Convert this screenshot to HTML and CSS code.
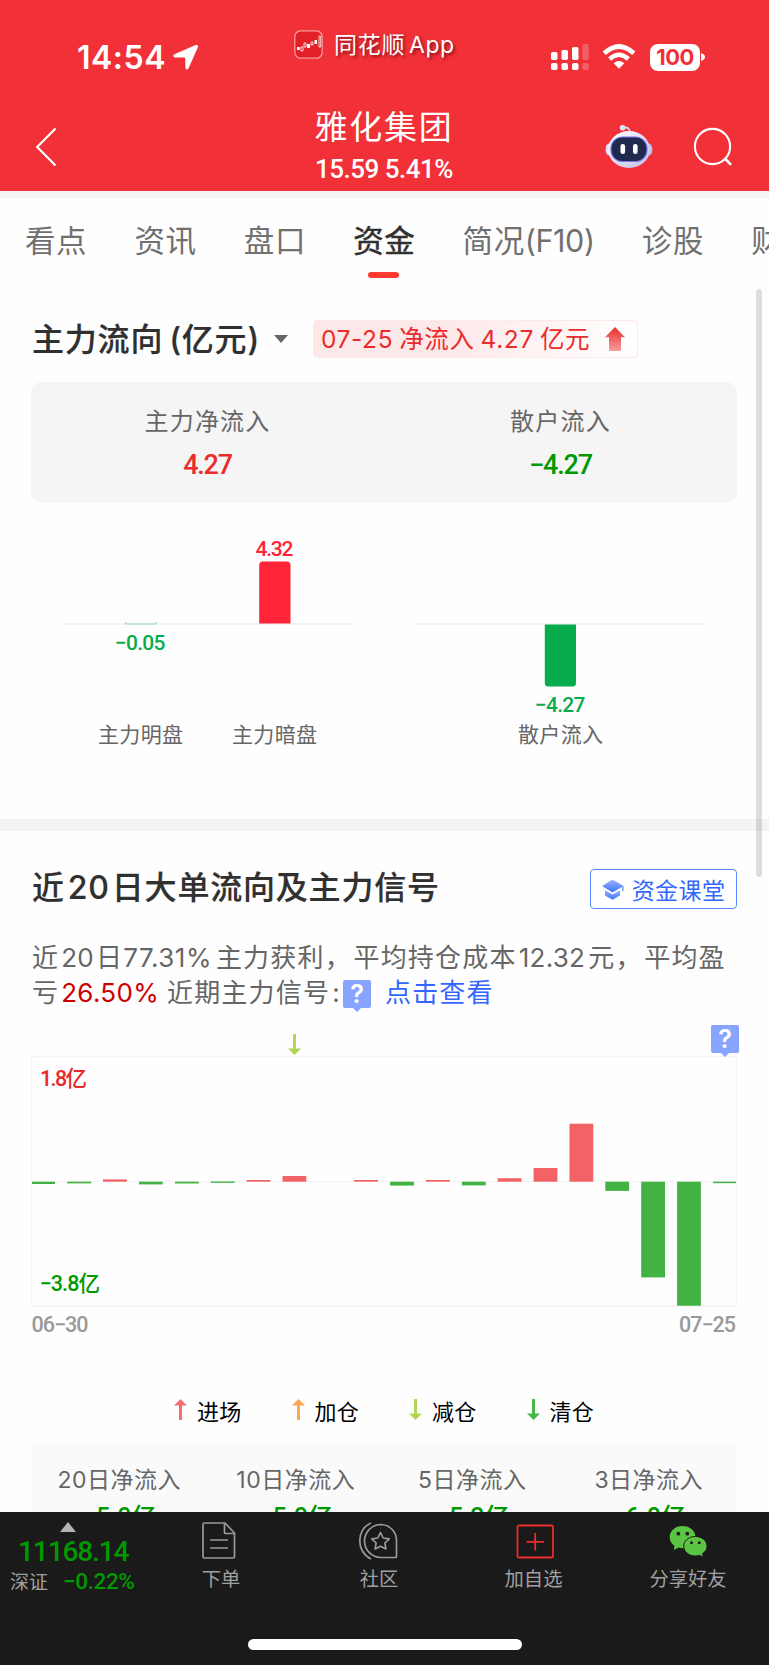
FILE: index.html
```html
<!DOCTYPE html>
<html lang="zh-CN">

<head>
    <meta charset="UTF-8" />
    <meta name="viewport" content="width=device-width, initial-scale=1.0" />
    <title>雅化集团 - 资金</title>
    <link rel="stylesheet" href="styles.css">
</head>

<body>

    <header>
        <div class="status">
            <div class="clock">
                <span class="time">14:54</span>
                <svg width="27" height="27" viewBox="0 0 27 27">
                    <path d="M25.6 1.2Q26.4 2 25.9 3.2L16.6 24.3Q15.9 25.8 14.6 25.6Q13.4 25.3 13.4 23.8L13.2 14.5Q13.2 13.6 12.3 13.6L3 13.4Q1.4 13.3 1.2 12.2Q1 11 2.4 10.3L23.6 1Q24.9 .5 25.6 1.2Z" fill="#fff" />
                </svg>
            </div>
            <div class="app-name">
                <svg width="29" height="29" viewBox="0 0 29 29">
                    <rect x=".8" y=".8" width="27.4" height="27.4" rx="6" fill="#e32027" stroke="#f99b9d" stroke-width="1.3" />
                    <path d="M3 17h2.800v3H3zM13 14h3v4h-3zM20.5 10h2.5v4h-2.5z" fill="#fff" />
                    <path d="M7 17h2v4H7zM10 13h2v4h-2zM17 12h2v3h-2zM25 6h1.7v11H25z" fill="none" stroke="#fff" stroke-width=".8" />
                </svg>
                <span>同花顺<i>App</i></span>
            </div>
            <div class="signals">
                <svg width="39" height="28" viewBox="0 0 39 28" fill="#fff">
                    <rect x="1" y="9" width="6.5" height="8" rx="1.8" />
                    <rect x="11.5" y="7" width="6.5" height="10" rx="1.8" />
                    <rect x="22" y="4" width="6.5" height="13" rx="1.8" />
                    <rect x="32.3" y="1" width="6.5" height="16" rx="1.8" opacity=".22" />
                    <rect x="1" y="20" width="6.5" height="7" rx="1.8" />
                    <rect x="11.5" y="20" width="6.5" height="7" rx="1.8" />
                    <rect x="22" y="20" width="6.5" height="7" rx="1.8" />
                    <rect x="32.3" y="20" width="6.5" height="7" rx="1.8" opacity=".22" />
                </svg>
                <svg class="wifi" width="34" height="26" viewBox="0 0 34 26">
                    <path d="M2.2 9.3Q17-4.3 31.8 9.3" fill="none" stroke="#fff" stroke-width="4.6" />
                    <path d="M7.6 15Q17 6.6 26.4 15" fill="none" stroke="#fff" stroke-width="4.4" />
                    <path d="M11.7 19.3Q17 14.8 22.3 19.3L17 24.7Z" fill="#fff" />
                </svg>
                <div class="battery">100</div>
                <svg width="4" height="8" viewBox="0 0 4 8">
                    <path d="M0 0Q4 1.3 4 4T0 8Z" fill="#fff" />
                </svg>
            </div>
        </div>
        <div class="topbar">
            <svg class="back" width="24" height="42" viewBox="0 0 24 42">
                <path d="M20.5 2.5L2.2 21L20.5 39.5" fill="none" stroke="#fff" stroke-width="2.2" />
            </svg>
            <div class="stock">
                <h1>雅化集团</h1>
                <p>15.59 5.41%</p>
            </div>
            <div class="tools">
                <svg width="48" height="45" viewBox="0 0 48 45">
                    <path d="M18 4Q24 2 25 8" fill="none" stroke="#d8dcf2" stroke-width="1.8" />
                    <circle cx="17.5" cy="3.8" r="2.8" fill="#dfe3f5" />
                    <ellipse cx="3.8" cy="25.5" rx="3.2" ry="6" fill="#d9dcf5" />
                    <ellipse cx="44.2" cy="25.5" rx="3.2" ry="6" fill="#b9bbe8" />
                    <ellipse cx="24" cy="25.5" rx="21" ry="18.5" fill="url(#shell)" />
                    <rect x="6" y="13" width="36" height="24.5" rx="11.5" fill="#202a4e" stroke="#7c73e8" stroke-width="1.2" />
                    <rect x="15.5" y="20" width="4.6" height="10" rx="2.2" fill="#fff" />
                    <rect x="28" y="20" width="4.6" height="10" rx="2.2" fill="#fff" />
                    <defs>
                        <linearGradient id="shell" x1="0" y1="0" x2="1" y2="1">
                            <stop offset="0" stop-color="#fff" />
                            <stop offset="1" stop-color="#bfbfe8" />
                        </linearGradient>
                    </defs>
                </svg>
                <svg class="search" width="42" height="42" viewBox="0 0 42 42">
                    <circle cx="20.5" cy="20.5" r="17.6" fill="none" stroke="#fff" stroke-width="2.1" />
                    <path d="M32.5 32L39 38.8" stroke="#fff" stroke-width="2.6" />
                </svg>
            </div>
        </div>
    </header>

    <nav>
        <a>看点</a>
        <a>资讯</a>
        <a>盘口</a>
        <a class="active">资金</a>
        <a>简况<i>(F10)</i></a>
        <a>诊股</a>
        <a>财务</a>
    </nav>

    <main>
        <section class="flow">
            <div class="flow-head">
                <h2>主力流向<i>(</i>亿元<i>)</i></h2>
                <span class="caret"></span>
                <div class="tag">
                    <span><i>07-25</i> 净流入 <i>4.27</i> 亿元</span>
                    <svg width="20" height="24" viewBox="0 0 20 24">
                        <defs>
                            <linearGradient id="up" x1="0" y1="0" x2="0" y2="1">
                                <stop offset="0" stop-color="#ea2c2c" />
                                <stop offset="1" stop-color="#f79c9e" />
                            </linearGradient>
                        </defs>
                        <path d="M10 0L20 10.3H16V22.5Q16 24 14.5 24H5.5Q4 24 4 22.5V10.3H0Z" fill="url(#up)" />
                    </svg>
                </div>
            </div>

            <div class="summary">
                <div>
                    <p>主力净流入</p>
                    <strong class="red">4.27</strong>
                </div>
                <div>
                    <p>散户流入</p>
                    <strong class="green">−4.27</strong>
                </div>
            </div>

            <svg class="chart" width="706" height="316" viewBox="31 503 706 316">
                <path d="M62.5 624H353M415.5 624H705.5" stroke="#f3f3f3" stroke-width="2" />
                <path d="M125.5 622V623Q125.5 624 128 624H154Q156.5 624 156.5 623V622" fill="none" stroke="#8fd6ae" stroke-width="1" />
                <path d="M259.2 623.6V565Q259.2 561.5 262.7 561.5H287Q290.5 561.5 290.5 565V623.6Z" fill="#ff2437" />
                <path d="M544.8 624.4V683Q544.8 686.6 548.3 686.6H572.5Q576 686.6 576 683V624.4Z" fill="#09ac4c" />
                <g class="num" font-size="21">
                    <text x="255.5" y="555.5" textLength="38" fill="#ff2437">4.32</text>
                    <text x="115" y="650" textLength="50.5" fill="#09ac4c">−0.05</text>
                    <text x="535" y="711.7" textLength="50.5" fill="#09ac4c">−4.27</text>
                </g>
                <g class="axis-name" font-size="21" fill="#666">
                    <text x="98" y="742" textLength="85">主力明盘</text>
                    <text x="232" y="742" textLength="85">主力暗盘</text>
                    <text x="518" y="742" textLength="85">散户流入</text>
                </g>
            </svg>
        </section>

        <section class="signal">
            <div class="signal-head">
                <h2>近<i class="n">20</i>日大单流向及主力信号</h2>
                <button>
                    <svg width="22" height="21" viewBox="0 0 22 21">
                        <defs>
                            <linearGradient id="cap" x1="0" y1="0" x2="0" y2="1">
                                <stop offset="0" stop-color="#9ab4ff" />
                                <stop offset="1" stop-color="#3f73fb" />
                            </linearGradient>
                        </defs>
                        <path d="M10.5 .5L21.5 7V12H20.3V7.7L10.5 13.5L0 7Z" fill="url(#cap)" />
                        <path d="M3 11.2L10.5 15.5L18 11.2V16.5L10.5 20.7L3 16.5Z" fill="url(#cap)" />
                    </svg>
                    资金课堂
                </button>
            </div>

            <p class="desc">近<i class="n">20</i>日<i class="pct">77.31%</i>主力获利<span class="comma">，</span>平均持仓成本<i class="n cost">12.32</i>元<span class="comma">，</span>平均盈<br>亏<i class="n loss">26.50%</i><span class="recent">近期主力信号<i class="colon">:</i></span><span class="help">?</span><a>点击查看</a></p>

            <div class="arrow-row">
                <svg width="13" height="21" viewBox="0 0 13 21">
                    <path d="M5 0h3v14.5h5L6.5 21L0 14.5h5z" fill="#b2d556" />
                </svg>
                <span class="help">?</span>
            </div>

            <svg class="chart" width="706" height="282" viewBox="31 1056 706 282">
                <rect x="31.5" y="1056.5" width="705" height="249.5" fill="none" stroke="#f3f3f3" stroke-width="1.4" />
                <path d="M32 1181.5H736" stroke="#f1f1f1" stroke-width="1" />
                <g fill="#f16365">
                    <rect x="103" y="1179.4" width="23.8" height="2.3" />
                    <rect x="246.6" y="1180" width="23.8" height="1.7" />
                    <rect x="282.5" y="1176" width="23.8" height="5.7" />
                    <rect x="354.2" y="1180" width="23.8" height="1.7" />
                    <rect x="426" y="1180" width="23.8" height="1.7" />
                    <rect x="497.7" y="1178.2" width="23.8" height="3.5" />
                    <rect x="533.6" y="1168" width="23.8" height="13.7" />
                    <rect x="569.5" y="1123.7" width="23.8" height="58" />
                </g>
                <g fill="#42b342">
                    <rect x="32" y="1181.7" width="23" height="2.3" />
                    <rect x="67.3" y="1181.7" width="23.8" height="1.7" />
                    <rect x="139" y="1181.7" width="23.8" height="2.7" />
                    <rect x="175" y="1181.7" width="23.8" height="1.8" />
                    <rect x="210.8" y="1181.5" width="23.8" height="1.4" />
                    <rect x="390.1" y="1181.7" width="23.8" height="3.9" />
                    <rect x="461.9" y="1181.7" width="23.8" height="3.7" />
                    <rect x="605.3" y="1181.7" width="23.8" height="9.2" />
                    <rect x="641.2" y="1181.7" width="23.8" height="95.7" />
                    <rect x="677.1" y="1181.7" width="23.8" height="124" />
                    <rect x="713" y="1181.7" width="23" height="1.5" />
                </g>
                <g class="num" font-size="21.5">
                    <text x="40" y="1085.5" textLength="47" fill="#ea2a2a">1.8亿</text>
                    <text x="39.5" y="1290.5" textLength="60.5" fill="#009900">−3.8亿</text>
                    <text x="31.5" y="1331.5" textLength="57" fill="#999">06−30</text>
                    <text x="679" y="1331.5" textLength="57" fill="#999">07−25</text>
                </g>
            </svg>

            <div class="legend">
                <span>
                    <svg width="13" height="21" viewBox="0 0 13 21"><path d="M5 21h3V6.5h5L6.5 0L0 6.5h5z" fill="#f16f70" /></svg>进场
                </span>
                <span>
                    <svg width="13" height="21" viewBox="0 0 13 21"><path d="M5 21h3V6.5h5L6.5 0L0 6.5h5z" fill="#ffa451" /></svg>加仓
                </span>
                <span>
                    <svg width="13" height="21" viewBox="0 0 13 21"><path d="M5 0h3v14.5h5L6.5 21L0 14.5h5z" fill="#b2d556" /></svg>减仓
                </span>
                <span>
                    <svg width="13" height="21" viewBox="0 0 13 21"><path d="M5 0h3v14.5h5L6.5 21L0 14.5h5z" fill="#48b648" /></svg>清仓
                </span>
            </div>

            <div class="totals">
                <div>
                    <p><i>20</i>日净流入</p>
                    <strong>−5.0亿</strong>
                </div>
                <div>
                    <p><i>10</i>日净流入</p>
                    <strong>−5.0亿</strong>
                </div>
                <div>
                    <p><i>5</i>日净流入</p>
                    <strong>−5.3亿</strong>
                </div>
                <div>
                    <p><i>3</i>日净流入</p>
                    <strong>−6.8亿</strong>
                </div>
            </div>
        </section>
        <div class="scrollbar"></div>
    </main>

    <footer>
        <div class="actions">
            <div class="index">
                <span class="up"></span>
                <b>11168.14</b>
                <p>深证<em>−0.22%</em></p>
            </div>
            <div class="action order">
                <svg width="40" height="40" viewBox="0 0 40 40" fill="none" stroke="#999" stroke-width="1.7">
                    <path d="M25 2H4.5Q3 2 3 3.5V35.5Q3 37 4.5 37H33Q34.5 37 34.5 35.5V12Z" />
                    <path d="M24.5 2.5V11.5Q24.5 12.5 25.5 12.5H34.5M10 19H28M10 27H28" />
                </svg>
                下单
            </div>
            <div class="action club">
                <svg width="40" height="40" viewBox="0 0 40 40" fill="none" stroke="#999" stroke-width="1.7">
                    <path d="M13 2C-2 8-2 31 13 38" />
                    <path d="M23 3.5A16.5 16.5 0 1 0 23 36.5H37.5Q38.5 36.5 38.5 35.5V20A16 16 0 0 0 23 3.5Z" />
                    <path d="M22.5 11.5L25.2 17L31.2 17.8L26.9 22L27.9 28L22.5 25.2L17.1 28L18.1 22L13.8 17.8L19.8 17Z" stroke-linejoin="round" />
                </svg>
                社区
            </div>
            <div class="action watch">
                <svg width="40" height="40" viewBox="0 0 40 40" fill="none" stroke="#ea2c2c" stroke-width="1.8">
                    <rect x="3.5" y="4.5" width="35.5" height="32" rx="1.5" />
                    <path d="M21.2 12V29.5M12.5 20.8H30" />
                </svg>
                加自选
            </div>
            <div class="action share">
                <svg width="40" height="40" viewBox="0 0 40 40">
                    <path d="M14.5 5C7.5 5 1.7 9.7 1.7 16.2C1.7 20 3.7 22.8 6.5 24.7L5.8 29L10.5 26.5Q12.5 27.2 14.5 27.2C22 27.2 27.5 22.5 27.5 16.2S22 5 14.5 5Z" fill="#5cc443" />
                    <path d="M27.5 15.5C20.8 15.5 15.7 19.8 15.7 25.2S20.8 35 27.5 35Q29.5 35 31.5 34.3L35.5 36.5L34.5 32.7C37.3 31 39 28.3 39 25.2C39 19.8 34 15.5 27.5 15.5Z" fill="#5cc443" stroke="#1a1a1a" stroke-width="1" />
                    <g fill="#1a1a1a">
                        <circle cx="10.3" cy="12.7" r="1.9" />
                        <circle cx="19.3" cy="12.7" r="1.9" />
                        <circle cx="23.5" cy="21.7" r="1.5" />
                        <circle cx="31.3" cy="21.7" r="1.5" />
                    </g>
                </svg>
                分享好友
            </div>
        </div>
        <div class="home-bar"></div>
    </footer>

</body>

</html>
```
FILE: styles.css
```css
* {
    box-sizing: border-box;
    margin: 0;
    padding: 0;
}

body {
    width: 769px;
    height: 1665px;
    overflow: hidden;
    display: flex;
    flex-direction: column;
    background: #fefefe;
    font-family: 'Noto Sans CJK SC', sans-serif;
    color: #666;
}

i {
    font-family: Inter, sans-serif;
    font-style: normal;
    line-height: 1;
}

svg {
    display: block;
    flex-shrink: 0;
}

/* header */
header {
    height: 191px;
    background: #f23037;
    color: #fff;
    flex-shrink: 0;
}

.status {
    height: 90px;
    display: flex;
}

.clock {
    width: 294px;
    padding: 37px 0 0 77px;
    display: flex;
    gap: 6px;
}

.clock svg {
    margin-top: 7px;
}

.time {
    width: 89px;
    font: 600 32px/41px Inter, sans-serif;
    letter-spacing: 0.5px;
    white-space: nowrap;
}

.app-name {
    width: 256px;
    padding-top: 30px;
    display: flex;
    gap: 11px;
    font-size: 23px;
    line-height: 29px;
    letter-spacing: 0.7px;
    text-shadow: 2px 2px 3px rgba(70, 0, 0, 0.6);
}

.app-name span {
    margin-top: -1px;
}

.app-name i {
    margin-left: 4px;
    letter-spacing: 0.5px;
}

.signals {
    display: flex;
    align-items: center;
    height: 28px;
    margin-top: 43px;
}

.wifi {
    margin: 0 14px 0 13px;
}

.battery {
    width: 50px;
    height: 27px;
    margin-right: 1px;
    border-radius: 8px;
    background: #fff;
    color: #f23037;
    font: 700 22px/27px Inter, sans-serif;
    letter-spacing: -0.5px;
    text-align: center;
}

.topbar {
    height: 101px;
    display: flex;
    align-items: flex-start;
    padding-left: 35px;
}

.back {
    margin-top: 36px;
}

.stock {
    width: 255px;
    margin-left: 197px;
    text-align: center;
    padding: 10px 0 0 1px;
    flex: 0 0 255px;
}

.stock h1 {
    font-size: 33px;
    font-weight: 400;
    line-height: 50px;
    letter-spacing: 1.7px;
}

.stock p {
    margin-top: 2px;
    font: 500 26px/34px Roboto, sans-serif;
    letter-spacing: -0.5px;
}

.tools {
    display: flex;
    gap: 39px;
    margin: 34px 0 0 94px;
}

.search {
    margin-top: 2px;
}

/* tabs */
nav {
    height: 91px;
    border-top: 7px solid #f5f5f5;
    padding: 17px 0 0 25px;
    display: flex;
    gap: 47.2px;
    overflow: hidden;
    flex-shrink: 0;
}

nav a {
    flex-shrink: 0;
    font-size: 30.5px;
    line-height: 48px;
    letter-spacing: 0.6px;
    color: #707070;
}

nav a i {
    letter-spacing: -0.4px;
}

nav .active {
    position: relative;
    color: #303030;
    -webkit-text-stroke: 0.5px #303030;
}

nav .active::after {
    content: "";
    position: absolute;
    left: 15px;
    top: 57px;
    width: 31px;
    height: 6px;
    border-radius: 3px;
    background: #ff3b30;
}

main {
    position: relative;
    height: 1230px;
    overflow: hidden;
    flex-shrink: 0;
}

h2 {
    margin-top: -3px;
    font-size: 32px;
    font-weight: 500;
    line-height: 48px;
    letter-spacing: 0.8px;
    color: #303030;
    -webkit-text-stroke: 0.2px #303030;
    white-space: nowrap;
}

/* main fund flow */
.flow {
    height: 549px;
    padding: 34px 32px 0 31px;
    border-bottom: 12px solid #f4f4f4;
}

.flow-head {
    height: 66px;
    display: flex;
}

.flow-head h2 {
    width: 243px;
    padding-left: 1px;
}

.flow-head h2 i:first-child {
    margin-left: 6px;
}

.caret {
    width: 0;
    height: 0;
    margin-top: 19px;
    border: 7.5px solid transparent;
    border-top: 8px solid #666;
    border-bottom: 0;
}

.tag {
    width: 325px;
    height: 38px;
    margin: 4px 0 0 25px;
    padding-left: 7px;
    display: flex;
    align-items: center;
    gap: 15px;
    border: 1px solid #fde8ea;
    border-radius: 4px;
    background: linear-gradient(90deg, #fde8e9 40%, #fff);
    font-size: 24.5px;
    line-height: 36px;
    letter-spacing: 0.6px;
    color: #ea2c2c;
    white-space: nowrap;
}

.tag span {
    width: 269px;
    margin-top: -2px;
}

.summary {
    height: 121px;
    display: flex;
    border-radius: 10px;
    background: #f5f5f5;
    text-align: center;
}

.summary div {
    flex: 1;
    padding-top: 20px;
}

.summary p {
    font-size: 24px;
    line-height: 36px;
    letter-spacing: 1.2px;
}

.summary strong {
    display: block;
    margin-top: 9px;
    font: 500 27px/36px Roboto, sans-serif;
    letter-spacing: -1.2px;
}

.red {
    color: #ea2c2c;
}

.green {
    color: #009900;
}

.num {
    font-family: Roboto, 'Noto Sans CJK SC', sans-serif;
    font-weight: 500;
}

.axis-name {
    font-family: 'Noto Sans CJK SC', sans-serif;
}

/* 20 day signals */
.signal {
    padding: 33px 32px 0 31px;
}

.signal-head {
    height: 74px;
    display: flex;
    justify-content: space-between;
    padding-left: 1px;
}

.signal-head .n {
    margin: 0 2px 0 3px;
}

button {
    width: 147px;
    height: 40px;
    margin-top: 5px;
    display: flex;
    align-items: center;
    justify-content: center;
    gap: 8px;
    border: 1.5px solid #5b88ff;
    border-radius: 4px;
    background: #fff;
    font: 400 23px/34px 'Noto Sans CJK SC', sans-serif;
    letter-spacing: 0.4px;
    color: #3366ff;
}

.desc {
    height: 87px;
    padding-left: 1px;
    font-size: 26px;
    line-height: 35px;
    letter-spacing: 1.2px;
    white-space: nowrap;
}

.desc i {
    letter-spacing: 0.3px;
}

.desc .n {
    margin: 0 2px;
}

.desc .pct {
    margin-right: 4px;
    letter-spacing: 0.5px;
}

.desc .comma {
    margin-right: 1.5px;
}

.desc .cost {
    margin-right: 3px;
}

.desc .loss {
    color: #cc0000;
    margin-right: 8px;
}

.desc .colon {
    margin-left: 2px;
}

.desc a {
    margin-left: 14px;
    color: #3366ff;
}

.help {
    position: relative;
    display: inline-block;
    width: 28px;
    height: 28px;
    border-radius: 2px;
    background: #87a4ff;
    color: #fff;
    font: 600 25px/28px Inter, sans-serif;
    letter-spacing: 0;
    text-align: center;
}

.desc .help {
    margin-left: 3px;
    vertical-align: -1px;
}

.help::after {
    content: "";
    position: absolute;
    left: 10px;
    top: 28px;
    border: 4px solid transparent;
    border-top-color: #87a4ff;
    border-bottom: 0;
}

.arrow-row {
    height: 31px;
    display: flex;
    justify-content: space-between;
    padding-left: 257px;
    margin-right: -2px;
}

.arrow-row svg {
    margin-top: 9px;
}

.legend {
    height: 104px;
    padding: 54px 0 0 143px;
    display: flex;
    gap: 56px;
    font-size: 22px;
    line-height: 32px;
    letter-spacing: 0.3px;
    color: #000;
}

.legend span {
    width: 61.5px;
    display: flex;
    align-items: center;
    gap: 10px;
    height: 35px;
    white-space: nowrap;
}

.totals {
    height: 120px;
    display: flex;
    background: #fafafa;
    text-align: center;
}

.totals div {
    flex: 1;
    padding-top: 18px;
}

.totals p {
    font-size: 23px;
    line-height: 36px;
    letter-spacing: 0.5px;
}

.totals strong {
    display: block;
    margin-top: 4px;
    font: 500 25px/36px Roboto, 'Noto Sans CJK SC', sans-serif;
    color: #009900;
}

.scrollbar {
    position: absolute;
    left: 756px;
    top: 7px;
    width: 6px;
    height: 588px;
    border-radius: 3px;
    background: rgba(0, 0, 0, 0.13);
}

/* bottom bar */
footer {
    height: 153px;
    background: #1a1a1a;
    color: #a0a0a0;
    flex-shrink: 0;
}

.actions {
    height: 127px;
    display: flex;
}

.index {
    width: 142px;
    padding-top: 10px;
    display: flex;
    flex-direction: column;
}

.index .up {
    width: 0;
    margin-left: 60px;
    border: 8.5px solid transparent;
    border-bottom: 10px solid #b3b3b3;
    border-top: 0;
}

.index b {
    margin: 4px 0 0 18px;
    font: 500 28px/32px Roboto, sans-serif;
    letter-spacing: -1.1px;
    color: #009900;
}

.index p {
    margin-top: -1px;
    padding-left: 10px;
    font-size: 19px;
    line-height: 28px;
    white-space: nowrap;
}

.index em {
    margin-left: 15px;
    font: 500 22.5px/28px Roboto, sans-serif;
    letter-spacing: -0.4px;
    color: #009900;
}

.action {
    display: flex;
    flex-direction: column;
    align-items: center;
    padding-top: 9px;
    font-size: 19.3px;
    line-height: 34px;
    white-space: nowrap;
}

.order {
    width: 158px;
}

.order svg,
.club svg {
    margin-left: -2px;
}

.club {
    width: 158px;
}

.watch {
    width: 151px;
}

.share {
    width: 158px;
}

.home-bar {
    width: 274px;
    height: 11px;
    margin: 0 auto;
    border-radius: 6px;
    background: #fff;
}
```
